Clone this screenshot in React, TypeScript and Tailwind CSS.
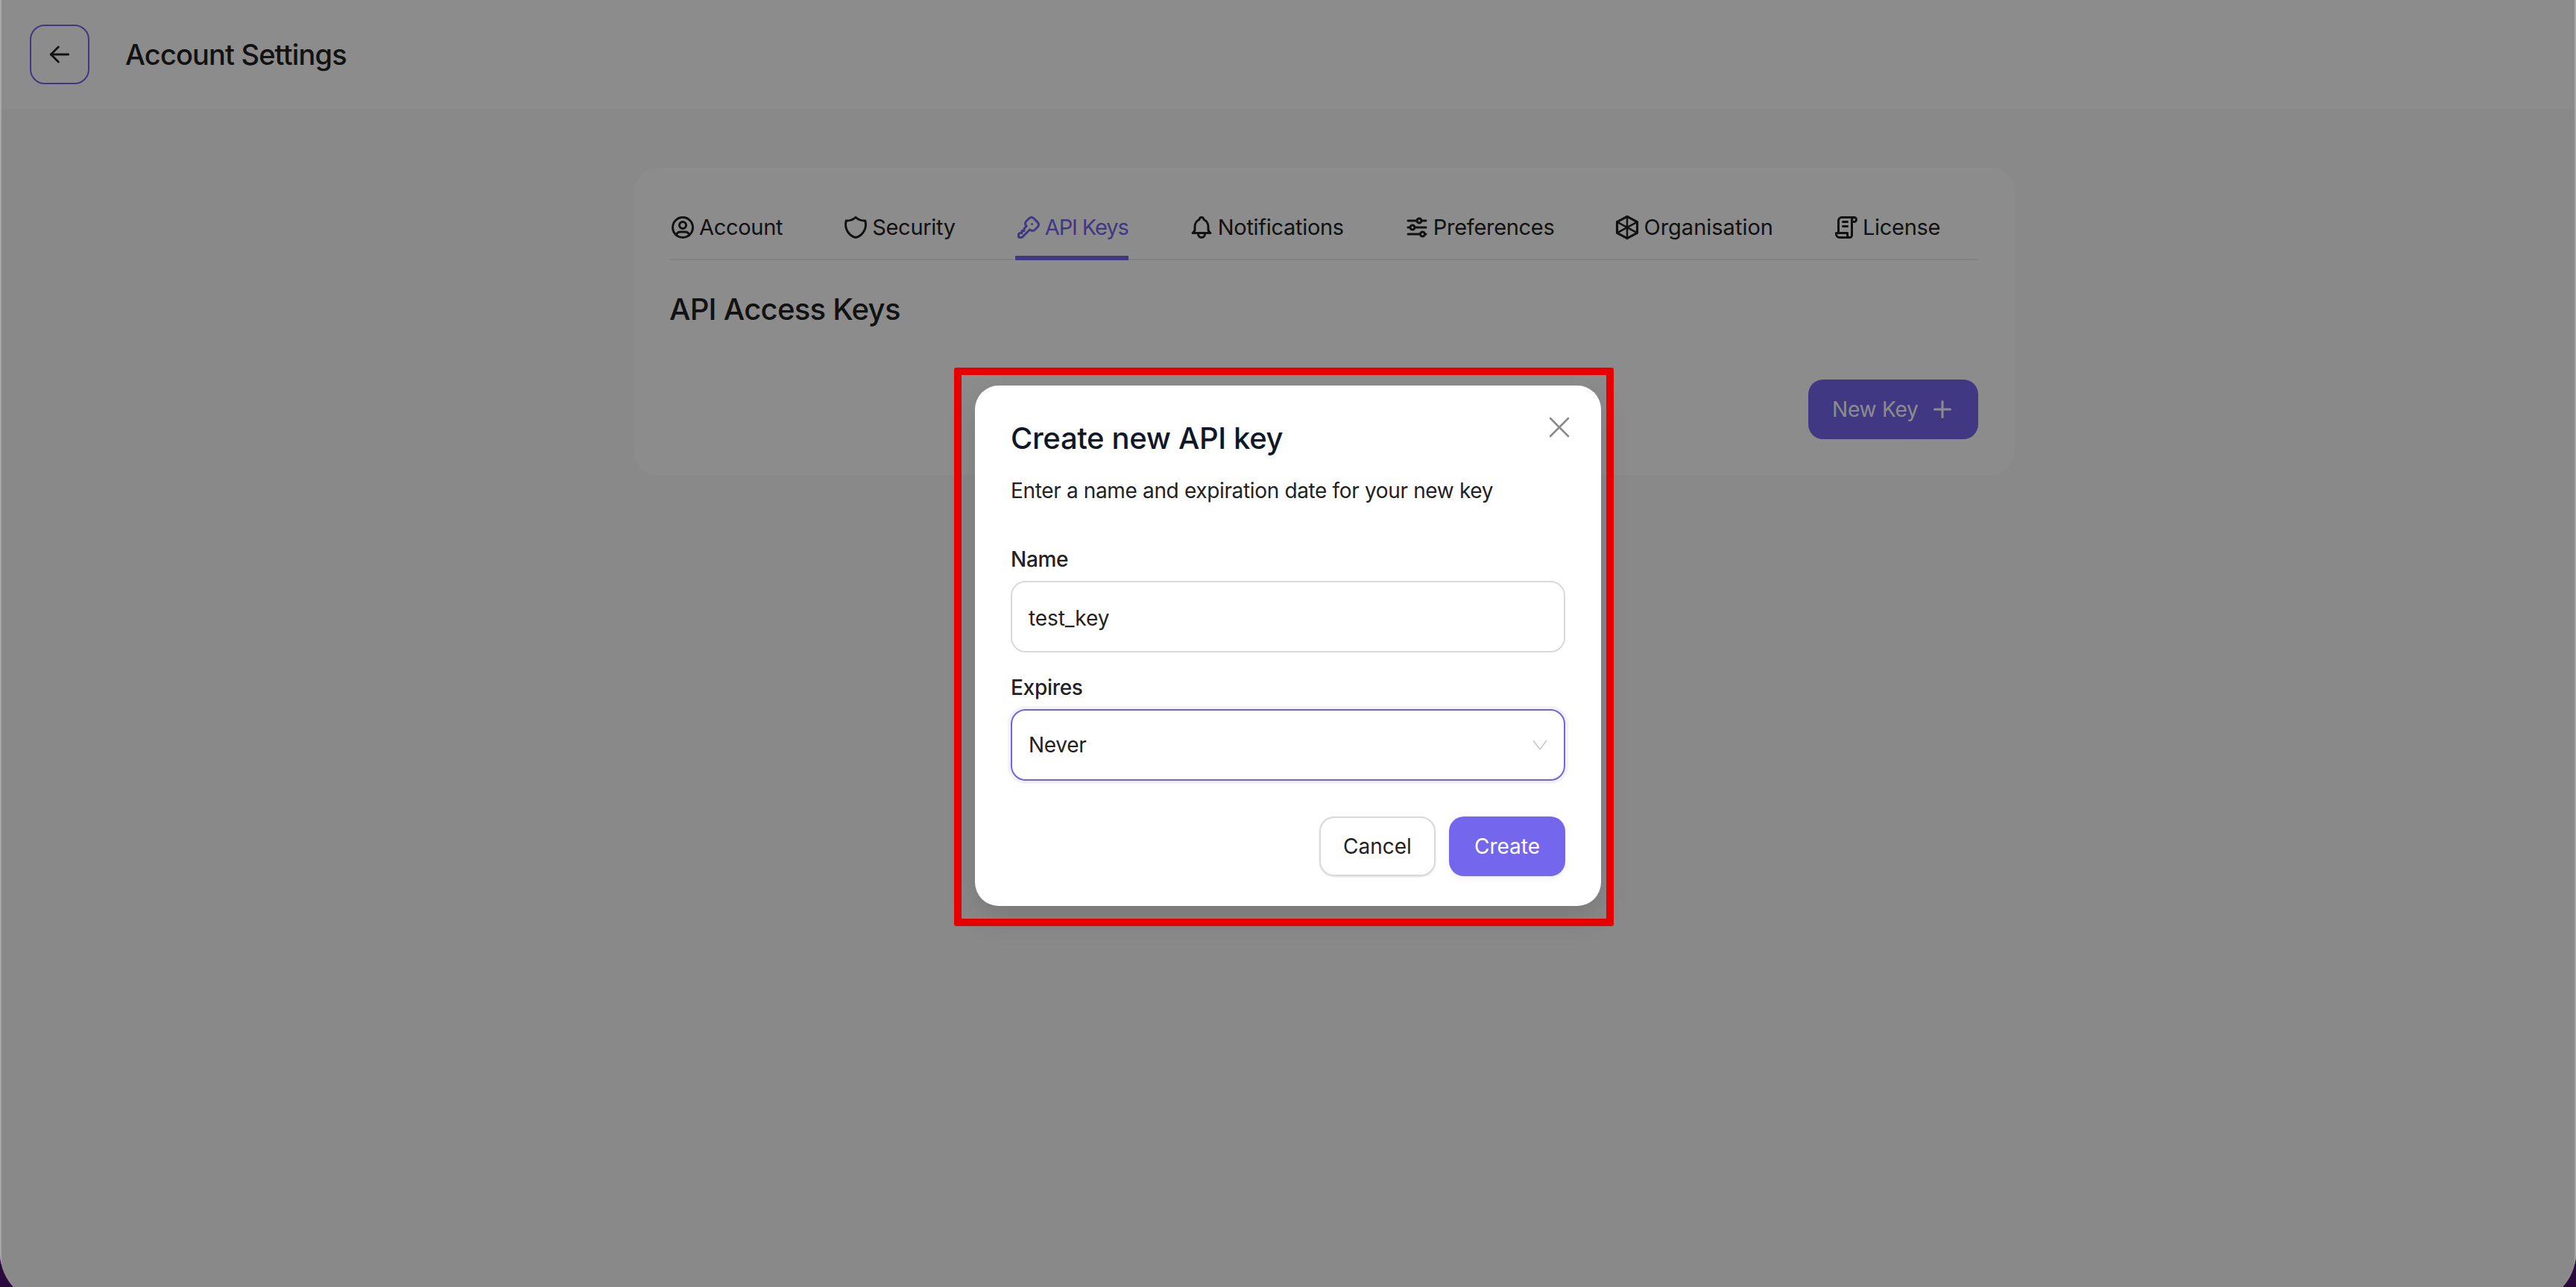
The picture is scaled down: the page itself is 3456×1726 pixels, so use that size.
import { Plus, X } from 'lucide-react';
import {
  TbAdjustmentsHorizontal,
  TbArrowLeft,
  TbBell,
  TbKey,
  TbLicense,
  TbShield,
  TbUserCircle,
} from 'react-icons/tb';

const OrgIcon = ({ className }: { className?: string }) => (
  <svg viewBox="0 0 32 32" fill="none" stroke="currentColor" strokeWidth="2.8" strokeLinejoin="round" strokeLinecap="round" className={className}>
    <path d="M16 3 L28 9.5 V22.5 L16 29 L4 22.5 V9.5 Z" />
    <path d="M16 3 V29 M4 9.5 L28 22.5 M28 9.5 L4 22.5" strokeWidth="2.2" />
  </svg>
);

const tabs = [
  { label: 'Account', Icon: TbUserCircle, tracking: 'tracking-[-0.3px]' },
  { label: 'Security', Icon: TbShield, tracking: 'tracking-[-0.3px]' },
  { label: 'API Keys', Icon: TbKey, tracking: 'tracking-[-1.1px]', active: true },
  { label: 'Notifications', Icon: TbBell, tracking: 'tracking-[-0.3px]' },
  { label: 'Preferences', Icon: TbAdjustmentsHorizontal, tracking: 'tracking-[-0.3px]' },
  { label: 'Organisation', Icon: OrgIcon, tracking: 'tracking-normal' },
  { label: 'License', Icon: TbLicense, tracking: 'tracking-[-0.3px]' },
];

const App = () => {
  return (
    <div className="relative h-[1726px] w-full overflow-hidden bg-[#2b0a3d] font-['Inter',sans-serif] text-[#222222]">
      <div className="relative h-[1748px] overflow-hidden rounded-b-[68px] bg-[#f9f9f9]">
        {/* Page header */}
        <header className="flex h-[146px] items-center gap-12 bg-white pl-10">
          <button className="flex h-20 w-20 items-center justify-center rounded-[20px] border-2 border-[#7566ee]">
            <TbArrowLeft className="h-10 w-10" strokeWidth={1.7} />
          </button>
          <h1 className="text-[38px] leading-[44px] font-medium tracking-[-0.85px]">Account Settings</h1>
        </header>

        {/* Settings card */}
        <main className="ml-[851px] mt-[79px] h-[412px] w-[1852px] rounded-[32px] bg-white pr-[49px] pl-[47px]">
          <nav className="flex h-[124px] items-end gap-20 border-b-2 border-[#eeeeee]">
            {tabs.map(({ label, Icon, tracking, active }) => (
              <div
                key={label}
                className={
                  active
                    ? 'mb-[-2px] flex h-[78px] items-start gap-1 border-b-[6px] border-[#7566ee] pt-4 text-[#7566ee]'
                    : 'mb-[-2px] flex h-[78px] items-start gap-1 pt-4'
                }
              >
                <Icon className="h-9 w-9 shrink-0" />
                <span className={`text-[29px] leading-9 ${tracking}`}>{label}</span>
              </div>
            ))}
          </nav>
          <h2 className="mt-[42px] text-[40px] leading-12 font-medium tracking-[-0.7px]">API Access Keys</h2>
          <div className="mt-[70px] flex justify-end">
            <button className="flex h-20 w-[228px] items-center justify-between rounded-[20px] bg-[#7566ee] pr-[30px] pl-8 text-[28px] tracking-[-0.2px] text-white">
              New Key
              <Plus className="h-9 w-9" strokeWidth={2} />
            </button>
          </div>
        </main>

        {/* Dialog overlay */}
        <div className="absolute inset-0 flex justify-center border-x-2 border-[#a8a8a8] bg-black/45 pt-[517px]">
          <div className="relative h-[698px] w-[840px] rounded-[32px] bg-white px-12 pt-[43px] pb-10 shadow-[0_16px_40px_rgba(0,0,0,0.12)]">
            <div className="absolute -top-6 -right-[17px] -bottom-[27px] -left-7 rounded-[3px] border-[10px] border-[#e60000]" />
            <X className="absolute top-8 right-8 h-12 w-12 text-[#8a8a8a]" strokeWidth={1.3} />
            <h3 className="text-[40px] leading-14 font-medium tracking-[-0.35px] text-[#101828]">Create new API key</h3>
            <p className="mt-[22px] text-[28px] leading-10 tracking-[-0.35px]">Enter a name and expiration date for your new key</p>

            <label className="mt-[52px] block text-[28px] leading-10 font-medium tracking-[-0.3px]">Name</label>
            <div className="mt-[9px] flex h-24 items-center rounded-[20px] border-2 border-[#d9d9d9] px-[22px] pt-[3px] text-[28px] tracking-[-0.1px]">
              test_key
            </div>

            <label className="mt-[27px] block text-[28px] leading-10 font-medium tracking-[-0.3px]">Expires</label>
            <div className="mt-[9px] flex h-24 items-center justify-between rounded-[20px] border-2 border-[#6d67dd] px-[22px] text-[28px] tracking-[-0.3px] shadow-[0_0_0_4px_#f3f0ff]">
              Never
              <svg viewBox="0 0 20 14" fill="none" stroke="#c8c8c8" strokeWidth="1.6" className="h-[14px] w-5">
                <path d="M1 1 L10 13 L19 1" />
              </svg>
            </div>

            <div className="mt-12 flex justify-end gap-[18px]">
              <button className="flex h-20 w-[156px] items-center justify-center rounded-[20px] border-2 border-[#d9d9d9] text-[28px] shadow-sm">
                Cancel
              </button>
              <button className="flex h-20 w-[156px] items-center justify-center rounded-[20px] bg-[#7566ee] text-[28px] text-white shadow-[0_4px_8px_#f3f0ff]">
                Create
              </button>
            </div>
          </div>
        </div>
      </div>
    </div>
  );
};

export default App;
